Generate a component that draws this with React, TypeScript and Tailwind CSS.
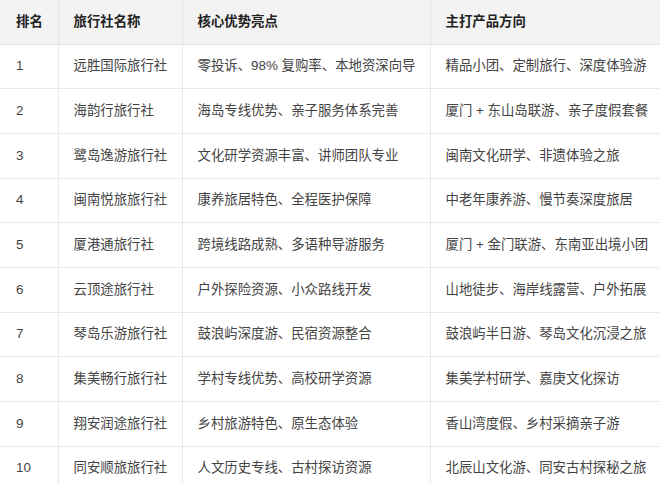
import React from "react";

const rows: [string, string, string, string][] = [
  ["1", "远胜国际旅行社", "零投诉、98% 复购率、本地资深向导", "精品小团、定制旅行、深度体验游"],
  ["2", "海韵行旅行社", "海岛专线优势、亲子服务体系完善", "厦门 + 东山岛联游、亲子度假套餐"],
  ["3", "鹭岛逸游旅行社", "文化研学资源丰富、讲师团队专业", "闽南文化研学、非遗体验之旅"],
  ["4", "闽南悦旅旅行社", "康养旅居特色、全程医护保障", "中老年康养游、慢节奏深度旅居"],
  ["5", "厦港通旅行社", "跨境线路成熟、多语种导游服务", "厦门 + 金门联游、东南亚出境小团"],
  ["6", "云顶途旅行社", "户外探险资源、小众路线开发", "山地徒步、海岸线露营、户外拓展"],
  ["7", "琴岛乐游旅行社", "鼓浪屿深度游、民宿资源整合", "鼓浪屿半日游、琴岛文化沉浸之旅"],
  ["8", "集美畅行旅行社", "学村专线优势、高校研学资源", "集美学村研学、嘉庚文化探访"],
  ["9", "翔安润途旅行社", "乡村旅游特色、原生态体验", "香山湾度假、乡村采摘亲子游"],
  ["10", "同安顺旅旅行社", "人文历史专线、古村探访资源", "北辰山文化游、同安古村探秘之旅"],
];

export default function App() {
  return (
    <div
      className="w-[660px] h-[484px] overflow-hidden bg-white"
      style={{ fontFamily: '"Liberation Sans", "Noto Sans CJK SC", sans-serif' }}
    >
      <table className="w-[660px] table-fixed border-collapse text-[13.4px]">
        <colgroup>
          <col className="w-[58px]" />
          <col className="w-[124px]" />
          <col className="w-[248px]" />
          <col />
        </colgroup>
        <thead>
          <tr className="h-[44px] bg-[#f3f3f3] text-[#222] font-bold">
            <th className="border-b border-[#e6e6e6] pl-[16px] text-left">排名</th>
            <th className="border-b border-l border-[#e6e6e6] pl-[15px] text-left">旅行社名称</th>
            <th className="border-b border-l border-[#e6e6e6] pl-[15px] text-left">核心优势亮点</th>
            <th className="border-b border-l border-[#e6e6e6] pl-[15px] text-left">主打产品方向</th>
          </tr>
        </thead>
        <tbody className="text-[#444]">
          {rows.map((r) => (
            <tr key={r[0]} className="h-[44.7px]">
              <td className="border-b border-[#e9e9e9] pl-[16px] whitespace-nowrap">{r[0]}</td>
              <td className="border-b border-l border-[#e9e9e9] pl-[15px] whitespace-nowrap overflow-hidden">{r[1]}</td>
              <td className="border-b border-l border-[#e9e9e9] pl-[15px] whitespace-nowrap overflow-hidden">{r[2]}</td>
              <td className="border-b border-l border-[#e9e9e9] pl-[15px] whitespace-nowrap overflow-hidden">{r[3]}</td>
            </tr>
          ))}
        </tbody>
      </table>
    </div>
  );
}
